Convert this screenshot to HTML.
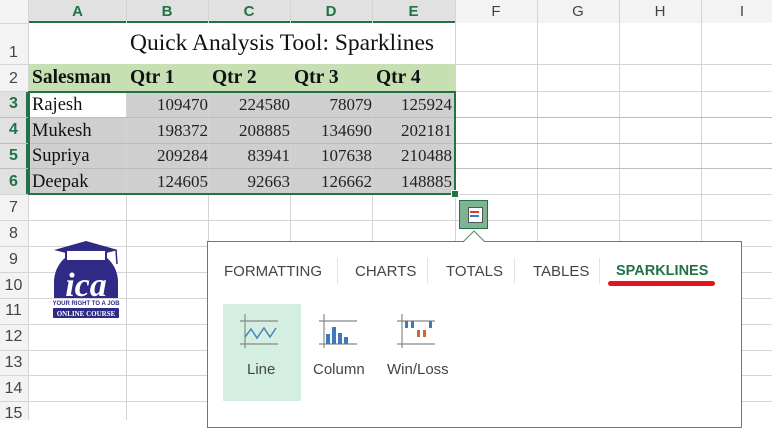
<!DOCTYPE html>
<html><head><meta charset="utf-8"><style>
body{margin:0;width:772px;height:420px;overflow:hidden;background:#fff;font-family:"Liberation Sans",sans-serif;position:relative}
.a{position:absolute}
.hl{position:absolute;height:1px;background:#d4d4d4;left:0;width:772px}
.vl{position:absolute;width:1px;background:#d4d4d4;top:0;height:420px}
.ch{position:absolute;top:0;height:23px;line-height:23px;text-align:center;font-size:15px;color:#444}
.rh{position:absolute;left:0;width:27px;text-align:center;font-size:16px;color:#444}
.c{position:absolute;font-family:"Liberation Serif",serif;font-size:17px;color:#111}
.tab{position:absolute;top:263px;font-size:15px;color:#444}
.sep{position:absolute;top:258px;width:1px;height:26px;background:#e2e2e2}
.lab{position:absolute;top:361px;font-size:15px;color:#444}
</style></head><body>
<div class="a" style="left:0;top:0;width:772px;height:23px;background:#f3f3f3"></div>
<div class="a" style="left:29px;top:0;width:426px;height:23px;background:#e1e1e1"></div>
<div class="a" style="left:0;top:0;width:28px;height:420px;background:#f3f3f3"></div>
<div class="a" style="left:0;top:91px;width:28px;height:103px;background:#e1e1e1"></div>
<div class="a" style="left:29px;top:21px;width:426px;height:2px;background:#217346"></div>
<div class="a" style="left:26px;top:91px;width:2px;height:103px;background:#217346"></div>
<div class="a" style="left:29px;top:64px;width:426px;height:27px;background:#c6e0b4"></div>
<div class="a" style="left:29px;top:91px;width:426px;height:103px;background:#cfcfcf"></div>
<div class="a" style="left:29px;top:92px;width:97px;height:25px;background:#fff"></div>
<!-- grid -->
<div class="vl" style="left:28px"></div>
<div class="vl" style="left:126px;top:91px;height:329px"></div><div class="vl" style="left:208px;top:91px;height:329px"></div><div class="vl" style="left:290px;top:91px;height:329px"></div><div class="vl" style="left:372px;top:91px;height:329px"></div>
<div class="vl" style="left:126px;height:23px"></div><div class="vl" style="left:208px;height:23px"></div><div class="vl" style="left:290px;height:23px"></div><div class="vl" style="left:372px;height:23px"></div>
<div class="vl" style="left:455px"></div><div class="vl" style="left:537px"></div><div class="vl" style="left:619px"></div><div class="vl" style="left:701px"></div>
<div class="hl" style="top:64px;left:455px;width:317px"></div>
<div class="hl" style="top:91px"></div><div class="hl" style="top:117px;background:#bdbdbd"></div><div class="hl" style="top:143px;background:#bdbdbd"></div><div class="hl" style="top:168px;background:#bdbdbd"></div><div class="hl" style="top:194px"></div><div class="hl" style="top:220px"></div><div class="hl" style="top:246px"></div><div class="hl" style="top:272px"></div><div class="hl" style="top:298px"></div><div class="hl" style="top:324px"></div><div class="hl" style="top:350px"></div><div class="hl" style="top:375px"></div><div class="hl" style="top:401px"></div>
<div class="a" style="left:0;top:23px;width:28px;height:1px;background:#d4d4d4"></div>
<div class="a" style="left:0;top:64px;width:28px;height:1px;background:#d4d4d4"></div>
<!-- selection border -->
<div class="a" style="left:28px;top:91px;width:424px;height:100px;border:2px solid #217346"></div>
<div class="a" style="left:451px;top:190px;width:6px;height:6px;background:#217346;border:1px solid #fff"></div>
<!-- headers -->
<div class="ch" style="left:29px;width:97px;color:#217346;font-weight:bold">A</div>
<div class="ch" style="left:126px;width:82px;color:#217346;font-weight:bold">B</div>
<div class="ch" style="left:208px;width:82px;color:#217346;font-weight:bold">C</div>
<div class="ch" style="left:290px;width:82px;color:#217346;font-weight:bold">D</div>
<div class="ch" style="left:372px;width:83px;color:#217346;font-weight:bold">E</div>
<div class="ch" style="left:455px;width:82px">F</div><div class="ch" style="left:537px;width:82px">G</div><div class="ch" style="left:619px;width:82px">H</div><div class="ch" style="left:701px;width:82px">I</div>
<div class="rh" style="top:44px">1</div><div class="rh" style="top:70px">2</div>
<div class="rh" style="top:95px;color:#217346;font-weight:bold">3</div><div class="rh" style="top:121px;color:#217346;font-weight:bold">4</div><div class="rh" style="top:147px;color:#217346;font-weight:bold">5</div><div class="rh" style="top:173px;color:#217346;font-weight:bold">6</div>
<div class="rh" style="top:199px">7</div><div class="rh" style="top:225px">8</div><div class="rh" style="top:251px">9</div><div class="rh" style="top:277px">10</div><div class="rh" style="top:302px">11</div><div class="rh" style="top:328px">12</div><div class="rh" style="top:354px">13</div><div class="rh" style="top:380px">14</div><div class="rh" style="top:405px">15</div>
<!-- content -->
<div class="c" style="left:130px;top:30px;font-size:23.5px">Quick Analysis Tool: Sparklines</div>
<div class="c" style="left:32px;top:67px;font-weight:bold;font-size:19.5px">Salesman</div>
<div class="c" style="left:130px;top:67px;font-weight:bold;font-size:19.5px">Qtr 1</div>
<div class="c" style="left:212px;top:67px;font-weight:bold;font-size:19.5px">Qtr 2</div>
<div class="c" style="left:294px;top:67px;font-weight:bold;font-size:19.5px">Qtr 3</div>
<div class="c" style="left:376px;top:67px;font-weight:bold;font-size:19.5px">Qtr 4</div>
<div style="position:absolute;left:0;top:95px;font-family:'Liberation Serif',serif;font-size:18.5px;color:#111">
<div style="position:absolute;left:32px;top:0">Rajesh</div><div style="position:absolute;left:32px;top:26px">Mukesh</div><div style="position:absolute;left:32px;top:51px">Supriya</div><div style="position:absolute;left:32px;top:77px">Deepak</div>
</div>
<div style="position:absolute;left:126px;top:95px;width:329px;font-family:'Liberation Serif',serif;font-size:17px;color:#222">
<div style="position:absolute;right:247px;top:0">109470</div><div style="position:absolute;right:165px;top:0">224580</div><div style="position:absolute;right:83px;top:0">78079</div><div style="position:absolute;right:3px;top:0">125924</div>
<div style="position:absolute;right:247px;top:26px">198372</div><div style="position:absolute;right:165px;top:26px">208885</div><div style="position:absolute;right:83px;top:26px">134690</div><div style="position:absolute;right:3px;top:26px">202181</div>
<div style="position:absolute;right:247px;top:51px">209284</div><div style="position:absolute;right:165px;top:51px">83941</div><div style="position:absolute;right:83px;top:51px">107638</div><div style="position:absolute;right:3px;top:51px">210488</div>
<div style="position:absolute;right:247px;top:77px">124605</div><div style="position:absolute;right:165px;top:77px">92663</div><div style="position:absolute;right:83px;top:77px">126662</div><div style="position:absolute;right:3px;top:77px">148885</div>
</div>
<!-- logo -->
<svg class="a" style="left:52px;top:240px" width="68" height="80" viewBox="0 0 68 80">
<path d="M2 42 A32 32 0 0 1 66 42 L66 58 L2 58 Z" fill="#2e2a86"/>
<path d="M2 10 L34 1 L66 10 L34 18 Z" fill="#2e2a86"/>
<rect x="14" y="10" width="40" height="11" fill="#fff" stroke="#2e2a86" stroke-width="2"/>
<line x1="64" y1="10" x2="65" y2="24" stroke="#2e2a86" stroke-width="1.5"/>
<text x="34" y="56" text-anchor="middle" font-family="Liberation Serif,serif" font-style="italic" font-weight="bold" font-size="34" fill="#fff">ica</text>
<text x="34" y="65" text-anchor="middle" font-family="Liberation Sans,sans-serif" font-weight="bold" font-size="6" fill="#2e2a86">YOUR RIGHT TO A JOB</text>
<rect x="1" y="68" width="66" height="10" fill="#2e2a86" rx="1"/>
<text x="34" y="76" text-anchor="middle" font-family="Liberation Serif,serif" font-weight="bold" font-size="7" fill="#fff">ONLINE COURSE</text>
</svg>
<!-- QA button -->
<div class="a" style="left:459px;top:200px;width:27px;height:27px;background:#7fb394;border:1px solid #217346"></div>
<div class="a" style="left:468px;top:207px;width:13px;height:14px;background:#fff;border:1px solid #555"></div>
<div class="a" style="left:470px;top:211px;width:9px;height:2px;background:#d04030"></div>
<div class="a" style="left:470px;top:215px;width:9px;height:2px;background:#3c78c8"></div>
<!-- popup -->
<div class="a" style="left:207px;top:241px;width:533px;height:185px;background:#fff;border:1px solid #4f8c68"></div>
<svg class="a" style="left:463px;top:229px" width="22" height="14"><path d="M0 13 L11 2 L22 13" fill="#fff" stroke="#4f8c68"/></svg>
<div class="tab" style="left:224px">FORMATTING</div>
<div class="sep" style="left:337px"></div>
<div class="tab" style="left:355px">CHARTS</div>
<div class="sep" style="left:427px"></div>
<div class="tab" style="left:446px">TOTALS</div>
<div class="sep" style="left:514px"></div>
<div class="tab" style="left:533px">TABLES</div>
<div class="sep" style="left:599px"></div>
<div class="tab" style="left:616px;color:#217346;font-weight:bold;font-size:14.5px">SPARKLINES</div>
<div class="a" style="left:608px;top:281px;width:107px;height:5px;border-radius:3px;background:#e3141e"></div>
<div class="a" style="left:223px;top:304px;width:78px;height:97px;background:#d4efe1"></div>
<svg class="a" style="left:240px;top:314px" width="42" height="38"><g stroke="#888" stroke-width="1.2" fill="none"><line x1="5" y1="0" x2="5" y2="34"/><line x1="0" y1="7" x2="38" y2="7"/><line x1="0" y1="30" x2="38" y2="30"/></g><polyline points="5,23 11,15 17,24 24,14 30,23 36,14" fill="none" stroke="#4a82c0" stroke-width="1.5"/></svg>
<svg class="a" style="left:319px;top:314px" width="42" height="38"><g stroke="#888" stroke-width="1.2" fill="none"><line x1="5" y1="0" x2="5" y2="34"/><line x1="0" y1="7" x2="38" y2="7"/><line x1="0" y1="30" x2="38" y2="30"/></g><g fill="#3f78bd"><rect x="7" y="20" width="4" height="10"/><rect x="13" y="13" width="4" height="17"/><rect x="19" y="19" width="4" height="11"/><rect x="25" y="23" width="4" height="7"/></g></svg>
<svg class="a" style="left:397px;top:314px" width="42" height="38"><g stroke="#888" stroke-width="1.2" fill="none"><line x1="5" y1="0" x2="5" y2="34"/><line x1="0" y1="7" x2="38" y2="7"/><line x1="0" y1="30" x2="38" y2="30"/></g><g fill="#3f78bd"><rect x="8" y="7" width="3" height="7"/><rect x="14" y="7" width="3" height="7"/><rect x="32" y="7" width="3" height="7"/></g><g fill="#d0653c"><rect x="20" y="16" width="3" height="7"/><rect x="26" y="16" width="3" height="7"/></g></svg>
<div class="lab" style="left:247px">Line</div>
<div class="lab" style="left:313px">Column</div>
<div class="lab" style="left:387px">Win/Loss</div>
</body></html>
